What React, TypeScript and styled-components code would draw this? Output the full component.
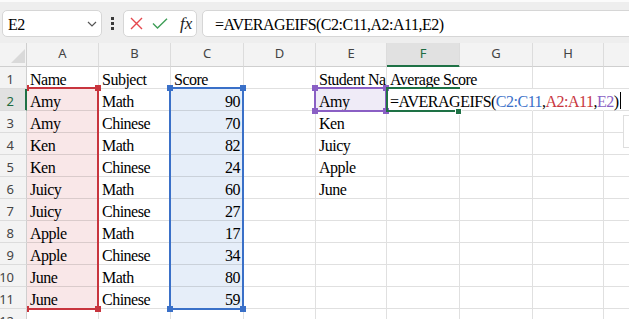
import React from "react";
import styled, { createGlobalStyle, css } from "styled-components";

const GlobalStyle = createGlobalStyle`
  html, body {
    margin: 0;
    padding: 0;
    background: #ffffff;
    overflow: hidden;
  }
  body {
    font-family: "Liberation Serif", serif;
  }
`;

const fills = {
  red: "#f9e7e8",
  blue: "#e6eef9",
  purple: "#efebf7",
};

const lines = {
  red: "#c8353e",
  blue: "#3a70c8",
  purple: "#8a5fc4",
  green: "#1e7145",
};

// sheet text: serif, slightly tightened so widths follow the reference
const sheetFont = css`
  font-family: "Liberation Serif", serif;
  font-size: 16px;
  letter-spacing: -0.5px;
  color: #000;
`;

const Window = styled.div`
  width: 629px;
  height: 319px;
  overflow: hidden;
  display: flex;
  flex-direction: column;
  background: #ffffff;
`;

/* ---------- formula bar ---------- */

const FormulaRow = styled.div`
  flex: none;
  height: 43px;
  box-sizing: border-box;
  display: flex;
  align-items: flex-start;
  padding: 8px 0 0 2px;
  background: #eeeeee;
  border-top: 2px solid #fbfbfb;
`;

const Box = styled.div`
  height: 27px;
  box-sizing: border-box;
  display: flex;
  align-items: center;
  background: #ffffff;
  border: 1px solid #d6d6d6;
  border-radius: 5px;
`;

const NameBox = styled(Box)`
  width: 100px;
  padding: 2px 4px 0 5px;
  ${sheetFont}
  line-height: 17px;

  svg {
    margin-left: auto;
    margin-top: -2px;
  }
`;

const Dots = styled.div`
  width: 21px;
  height: 27px;
  display: flex;
  flex-direction: column;
  align-items: center;
  justify-content: center;
  gap: 2px;

  span {
    width: 3px;
    height: 3px;
    background: #3a3a3a;
  }
`;

const Buttons = styled(Box)`
  width: 74px;
  padding-left: 6px;

  svg:nth-child(2) {
    margin-left: 9px;
  }
`;

const Fx = styled.span`
  margin-left: 12px;
  font: italic 17px/17px "Liberation Serif", serif;
  color: #222;
`;

const FormulaInput = styled(Box)`
  flex: 1;
  margin: 0 -10px 0 5px;
  padding: 1px 0 0 12px;
  ${sheetFont}
  line-height: 17px;
  white-space: nowrap;
`;

/* ---------- sheet ---------- */

const gridTemplate = css`
  display: grid;
  grid-template-columns: 27px 72px 72px 73px 72px 71px 73px 73px 71px 72px;
  grid-template-rows: 24px repeat(12, 22px);
`;

const Stack = styled.div`
  position: relative;
  display: grid;
  flex: 1;
  min-height: 0;
  overflow: hidden;

  & > * {
    grid-area: 1 / 1;
  }
`;

const Cells = styled.div`
  ${gridTemplate}
`;

const Overlays = styled.div`
  ${gridTemplate}
  position: relative;
  pointer-events: none;
  clip-path: inset(0 0 0 27px);
`;

const Corner = styled.div`
  box-sizing: border-box;
  display: flex;
  justify-content: flex-end;
  align-items: flex-end;
  padding: 0 1px 3px 0;
  background: #f3f3f3;
  border-right: 1px solid #cfcfcf;
  border-bottom: 1px solid #cfcfcf;

  &::after {
    content: "";
    width: 0;
    height: 0;
    border-left: 14px solid transparent;
    border-bottom: 14px solid #d9d9d9;
  }
`;

const ColHeader = styled.div<{ $active?: boolean }>`
  box-sizing: border-box;
  display: flex;
  align-items: center;
  justify-content: center;
  padding-bottom: 3px;
  background: #f3f3f3;
  border-right: 1px solid #dcdcdc;
  border-bottom: 1px solid #cfcfcf;
  font: 13px "Noto Sans", sans-serif;
  color: #444;

  ${(p) =>
    p.$active &&
    css`
      background: #e1e1e1;
      color: #1e6b41;
      border-bottom-color: ${lines.green};
      box-shadow: inset 0 -1px 0 ${lines.green};
    `}
`;

const RowHeader = styled.div<{ $active?: boolean }>`
  box-sizing: border-box;
  display: flex;
  align-items: flex-end;
  justify-content: flex-end;
  padding: 0 12px 2px 0;
  background: #f3f3f3;
  border-right: 1px solid #cfcfcf;
  border-bottom: 1px solid #dcdcdc;
  font: 13px/13px "Noto Sans", sans-serif;
  color: #444;

  ${(p) =>
    p.$active &&
    css`
      background: #e1e1e1;
      color: #1e6b41;
      border-right-color: ${lines.green};
      box-shadow: inset -1px 0 0 ${lines.green};
    `}
`;

const Cell = styled.div<{ $fill?: string; $num?: boolean; $open?: boolean; $clip?: boolean }>`
  box-sizing: border-box;
  min-width: 0;
  display: flex;
  align-items: flex-end;
  justify-content: ${(p) => (p.$num ? "flex-end" : "flex-start")};
  padding: 0 3px 1px;
  background: ${(p) => p.$fill ?? "transparent"};
  border-right: 1px solid ${(p) => (p.$open ? "transparent" : "rgba(0, 0, 0, 0.12)")};
  border-bottom: 1px solid rgba(0, 0, 0, 0.12);
  ${sheetFont}
  line-height: 14px;
  white-space: nowrap;
  overflow: ${(p) => (p.$clip ? "hidden" : "visible")};
`;

const Ref = styled.span<{ $color: string }>`
  color: ${(p) => p.$color};
`;

const Caret = styled.span`
  display: inline-block;
  width: 1px;
  height: 17px;
  margin-left: 1px;
  vertical-align: -2px;
  background: #000;
`;

const RangeBox = styled.div<{ $area: string; $color: string; $open?: boolean }>`
  grid-area: ${(p) => p.$area};
  position: relative;
  margin: -2px 0 -1px -2px;
  border: 2px solid ${(p) => p.$color};
  ${(p) =>
    p.$open &&
    css`
      margin-left: -1px;
      border-right: none;
    `}
`;

const Handle = styled.span<{ $pos: "tl" | "tr" | "bl" | "br"; $color: string }>`
  position: absolute;
  width: 6px;
  height: 6px;
  background: ${(p) => p.$color};
  ${(p) => (p.$pos[0] === "t" ? "top: -4px;" : "bottom: -4px;")}
  ${(p) => (p.$pos[1] === "l" ? "left: -4px;" : "right: -4px;")}
`;

const FillHandle = styled.span`
  position: absolute;
  right: -1px;
  bottom: -4px;
  width: 5px;
  height: 5px;
  background: ${lines.green};
  box-shadow: 0 0 0 1px #ffffff;
`;

const ScreenTip = styled.div`
  position: absolute;
  left: 623px;
  top: 72px;
  width: 30px;
  height: 33px;
  box-sizing: border-box;
  background: #ffffff;
  border: 1px solid #dedede;
`;

/* ---------- data ---------- */

type Row = { a: string; b: string; c: string; e?: string };

const rows: Row[] = [
  { a: "Name", b: "Subject", c: "Score", e: "Student Na" },
  { a: "Amy", b: "Math", c: "90", e: "Amy" },
  { a: "Amy", b: "Chinese", c: "70", e: "Ken" },
  { a: "Ken", b: "Math", c: "82", e: "Juicy" },
  { a: "Ken", b: "Chinese", c: "24", e: "Apple" },
  { a: "Juicy", b: "Math", c: "60", e: "June" },
  { a: "Juicy", b: "Chinese", c: "27" },
  { a: "Apple", b: "Math", c: "17" },
  { a: "Apple", b: "Chinese", c: "34" },
  { a: "June", b: "Math", c: "80" },
  { a: "June", b: "Chinese", c: "59" },
  { a: "", b: "", c: "" },
];

const columns = ["A", "B", "C", "D", "E", "F", "G", "H"];

const corners: Array<"tl" | "tr" | "bl" | "br"> = ["tl", "tr", "bl", "br"];

const FormulaText = () => (
  <span>
    =AVERAGEIFS(
    <Ref $color={lines.blue}>C2:C11</Ref>,<Ref $color={lines.red}>A2:A11</Ref>,
    <Ref $color={lines.purple}>E2</Ref>)
    <Caret />
  </span>
);

const Range = ({ area, color }: { area: string; color: string }) => (
  <RangeBox $area={area} $color={color}>
    {corners.map((c) => (
      <Handle key={c} $pos={c} $color={color} />
    ))}
  </RangeBox>
);

export default function App() {
  return (
    <>
      <GlobalStyle />
      <Window>
        <FormulaRow>
          <NameBox>
            E2
            <svg width="10" height="6" viewBox="0 0 10 6">
              <path d="M1 1 L5 5 L9 1" stroke="#555" strokeWidth="1.2" fill="none" />
            </svg>
          </NameBox>
          <Dots>
            <span />
            <span />
            <span />
          </Dots>
          <Buttons>
            <svg width="13" height="13" viewBox="0 0 13 13">
              <path d="M1 1 L12 12 M12 1 L1 12" stroke="#e5474d" strokeWidth="1.4" fill="none" />
            </svg>
            <svg width="16" height="11" viewBox="0 0 16 11">
              <path d="M1 5.5 L5.5 10 L15 0.8" stroke="#3e9e57" strokeWidth="1.4" fill="none" />
            </svg>
            <Fx>fx</Fx>
          </Buttons>
          <FormulaInput>=AVERAGEIFS(C2:C11,A2:A11,E2)</FormulaInput>
        </FormulaRow>

        <Stack>
          <Cells>
            <Corner />
            {columns.map((c) => (
              <ColHeader key={c} $active={c === "F"}>
                {c}
              </ColHeader>
            ))}
            <ColHeader />
            {rows.map((row, i) => {
              const r = i + 1;
              const inRange = r >= 2 && r <= 11;
              return (
                <React.Fragment key={r}>
                  <RowHeader $active={r === 2}>{r}</RowHeader>
                  <Cell $fill={inRange ? fills.red : undefined}>{row.a}</Cell>
                  <Cell>{row.b}</Cell>
                  <Cell $num={r > 1} $fill={inRange ? fills.blue : undefined}>
                    {row.c}
                  </Cell>
                  <Cell />
                  <Cell $clip={r === 1} $fill={r === 2 ? fills.purple : undefined}>
                    {row.e}
                  </Cell>
                  <Cell $open={r === 1 || r === 2}>
                    {r === 1 ? "Average Score" : r === 2 ? <FormulaText /> : null}
                  </Cell>
                  <Cell $open={r === 2} />
                  <Cell $open={r === 2} />
                  <Cell />
                </React.Fragment>
              );
            })}
          </Cells>

          <Overlays>
            <Range area="3 / 2 / 13 / 3" color={lines.red} />
            <Range area="3 / 4 / 13 / 5" color={lines.blue} />
            <Range area="3 / 6 / 4 / 7" color={lines.purple} />
            <RangeBox $area="3 / 7 / 4 / 8" $color={lines.green} $open>
              <FillHandle />
            </RangeBox>
          </Overlays>

          <ScreenTip />
        </Stack>
      </Window>
    </>
  );
}
